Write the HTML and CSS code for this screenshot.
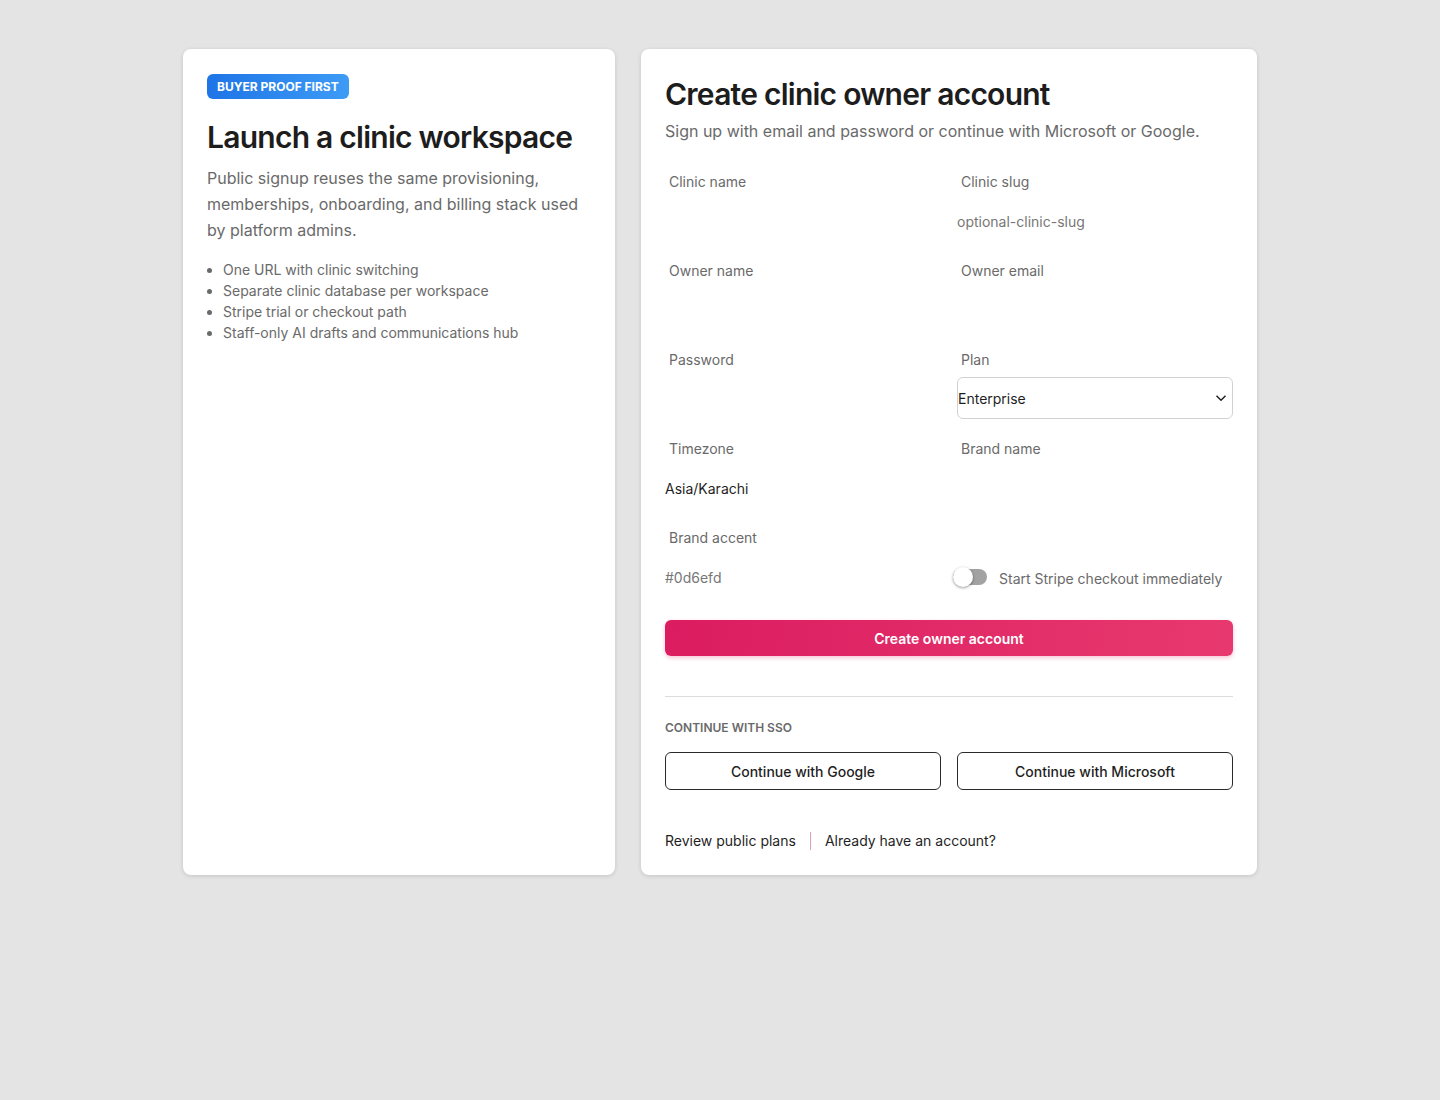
FILE: index.html
```html
<!DOCTYPE html>
<html lang="en">
<head>
    <meta charset="UTF-8">
    <meta name="viewport" content="width=device-width, initial-scale=1.0">
    <title>Create clinic owner account</title>
    <link rel="stylesheet" href="styles.css">
</head>
<body>

    <div class="page">
        <!-- left: pitch -->
        <section class="card intro">
            <span class="badge">Buyer proof first</span>
            <h1>Launch a clinic workspace</h1>
            <p class="lead">Public signup reuses the same provisioning, memberships, onboarding, and billing stack used by platform admins.</p>
            <ul class="points">
                <li>One URL with clinic switching</li>
                <li>Separate clinic database per workspace</li>
                <li>Stripe trial or checkout path</li>
                <li>Staff-only AI drafts and communications hub</li>
            </ul>
        </section>

        <!-- right: signup form -->
        <section class="card signup">
            <h2>Create clinic owner account</h2>
            <p class="sub">Sign up with email and password or continue with Microsoft or Google.</p>

            <form class="form-grid" onsubmit="return false">
                <div class="field">
                    <label>Clinic name</label>
                    <input type="text">
                </div>
                <div class="field">
                    <label>Clinic slug</label>
                    <input type="text" placeholder="optional-clinic-slug">
                </div>
                <div class="field">
                    <label>Owner name</label>
                    <input type="text">
                </div>
                <div class="field">
                    <label>Owner email</label>
                    <input type="email">
                </div>
                <div class="field">
                    <label>Password</label>
                    <input type="password">
                </div>
                <div class="field">
                    <label>Plan</label>
                    <div class="select-wrap">
                        <select>
                            <option>Starter</option>
                            <option>Growth</option>
                            <option selected>Enterprise</option>
                        </select>
                        <svg class="chev" width="12" height="8" viewBox="0 0 12 8"><path d="M1.5 1.8 6 6.2l4.5-4.4" fill="none" stroke="#222" stroke-width="1.5"/></svg>
                    </div>
                </div>
                <div class="field">
                    <label>Timezone</label>
                    <input type="text" value="Asia/Karachi">
                </div>
                <div class="field">
                    <label>Brand name</label>
                    <input type="text">
                </div>
                <div class="field">
                    <label>Brand accent</label>
                    <input type="text" placeholder="#0d6efd">
                </div>
                <div class="field toggle-field">
                    <div class="toggle">
                        <span class="track"><span class="knob"></span></span>
                        <span class="toggle-text">Start Stripe checkout immediately</span>
                    </div>
                </div>

                <button class="primary" type="submit">Create owner account</button>
            </form>

            <hr class="divider">

            <div class="sso-title">Continue with SSO</div>
            <div class="sso">
                <button class="outline" type="button">Continue with Google</button>
                <button class="outline" type="button">Continue with Microsoft</button>
            </div>

            <div class="links">
                <a href="#">Review public plans</a>
                <span class="sep"></span>
                <a href="#">Already have an account?</a>
            </div>
        </section>
    </div>

</body>
</html>
```

FILE: styles.css
```css
body {
    margin: 0;
    background-color: #e4e4e4;
    font-family: Inter, "Noto Sans", Arial, sans-serif;
    color: #1f1f1f;
}

.page {
    max-width: 1074px;
    margin: 0 auto;
    padding: 49px 0;
    display: grid;
    grid-template-columns: 432px 616px;
    gap: 26px;
}

.card {
    background-color: #fff;
    border-radius: 8px;
    box-shadow: 0 1px 4px rgba(0, 0, 0, 0.14);
    padding: 24px;
    box-sizing: border-box;
}

/* left card */
.badge {
    display: inline-block;
    margin-top: 1px;
    padding: 5px 10px;
    border-radius: 6px;
    background: linear-gradient(90deg, #1f74e6, #3d9cf6);
    color: #fff;
    font-size: 12px;
    font-weight: 700;
    line-height: 15px;
    text-transform: uppercase;
}

h1, h2 {
    margin: 0;
    font-size: 30px;
    line-height: 42px;
    font-weight: 600;
    letter-spacing: -0.75px;
    color: #1d1d1d;
}

.intro h1 {
    margin-top: 17px;
}

.lead {
    margin: 7px 0 0;
    font-size: 16px;
    line-height: 26px;
    color: #6a6a6a;
}

.points {
    margin: 16px 0 0;
    padding-left: 16px;
    font-size: 14px;
    line-height: 21px;
    color: #6a6a6a;
}

/* right card */
.sub {
    margin: 4px 0 0;
    font-size: 16px;
    line-height: 24px;
    color: #6a6a6a;
}

.form-grid {
    margin-top: 29px;
    display: grid;
    grid-template-columns: 1fr 1fr;
    column-gap: 16px;
    row-gap: 20px;
}

.field label {
    display: block;
    padding: 0 4px;
    margin-bottom: 9px;
    font-size: 14px;
    line-height: 20px;
    color: #6a6a6a;
}

.field input {
    display: block;
    width: 100%;
    height: 40px;
    padding: 0;
    border: none;
    background: transparent;
    font-family: inherit;
    font-size: 14px;
    color: #1f1f1f;
    outline: none;
}

.field input::placeholder {
    color: #777;
}

.select-wrap {
    position: relative;
    margin-top: -2px;
}

.select-wrap select {
    display: block;
    width: 100%;
    height: 42px;
    padding: 0;
    border: 1px solid #d2d2d2;
    border-radius: 6px;
    background-color: #fff;
    font-family: inherit;
    font-size: 14px;
    color: #1f1f1f;
    appearance: none;
    -webkit-appearance: none;
}

.chev {
    position: absolute;
    right: 6px;
    top: 17px;
    pointer-events: none;
}

.toggle-field {
    display: flex;
    align-items: flex-end;
}

.toggle {
    display: flex;
    align-items: center;
    gap: 12px;
    height: 40px;
    margin-left: -4px;
}

.track {
    position: relative;
    width: 34px;
    height: 16px;
    border-radius: 8px;
    background-color: #a2a2a2;
}

.knob {
    position: absolute;
    left: 0;
    top: -2px;
    width: 20px;
    height: 20px;
    border-radius: 50%;
    background-color: #fff;
    box-shadow: 0 1px 3px rgba(0, 0, 0, 0.4);
}

.toggle-text {
    font-size: 14px;
    color: #6a6a6a;
    margin-top: 2px;
}

.primary {
    grid-column: 1 / -1;
    margin-top: 3px;
    height: 36px;
    border: none;
    border-radius: 6px;
    background: linear-gradient(100deg, #db1c60, #e8396f);
    box-shadow: 0 2px 4px rgba(219, 28, 96, 0.25);
    color: #fff;
    font-family: inherit;
    font-size: 14px;
    font-weight: 600;
    cursor: pointer;
}

.divider {
    margin: 40px 0 0;
    border: none;
    border-top: 1px solid #dcdcdc;
}

.sso-title {
    margin-top: 23px;
    font-size: 12px;
    line-height: 16px;
    font-weight: 600;
    text-transform: uppercase;
    color: #6a6a6a;
}

.sso {
    margin-top: 16px;
    display: grid;
    grid-template-columns: 1fr 1fr;
    gap: 16px;
}

.outline {
    height: 38px;
    border: 1px solid #2a2a2a;
    border-radius: 6px;
    background-color: #fff;
    font-family: inherit;
    font-size: 14px;
    font-weight: 500;
    color: #1f1f1f;
    cursor: pointer;
}

.links {
    margin-top: 41px;
    display: flex;
    align-items: center;
    gap: 14px;
    font-size: 14px;
    line-height: 20px;
}

.links a {
    color: #1f1f1f;
    text-decoration: none;
}

.sep {
    width: 1px;
    height: 18px;
    background-color: #e0a0b0;
}
```
